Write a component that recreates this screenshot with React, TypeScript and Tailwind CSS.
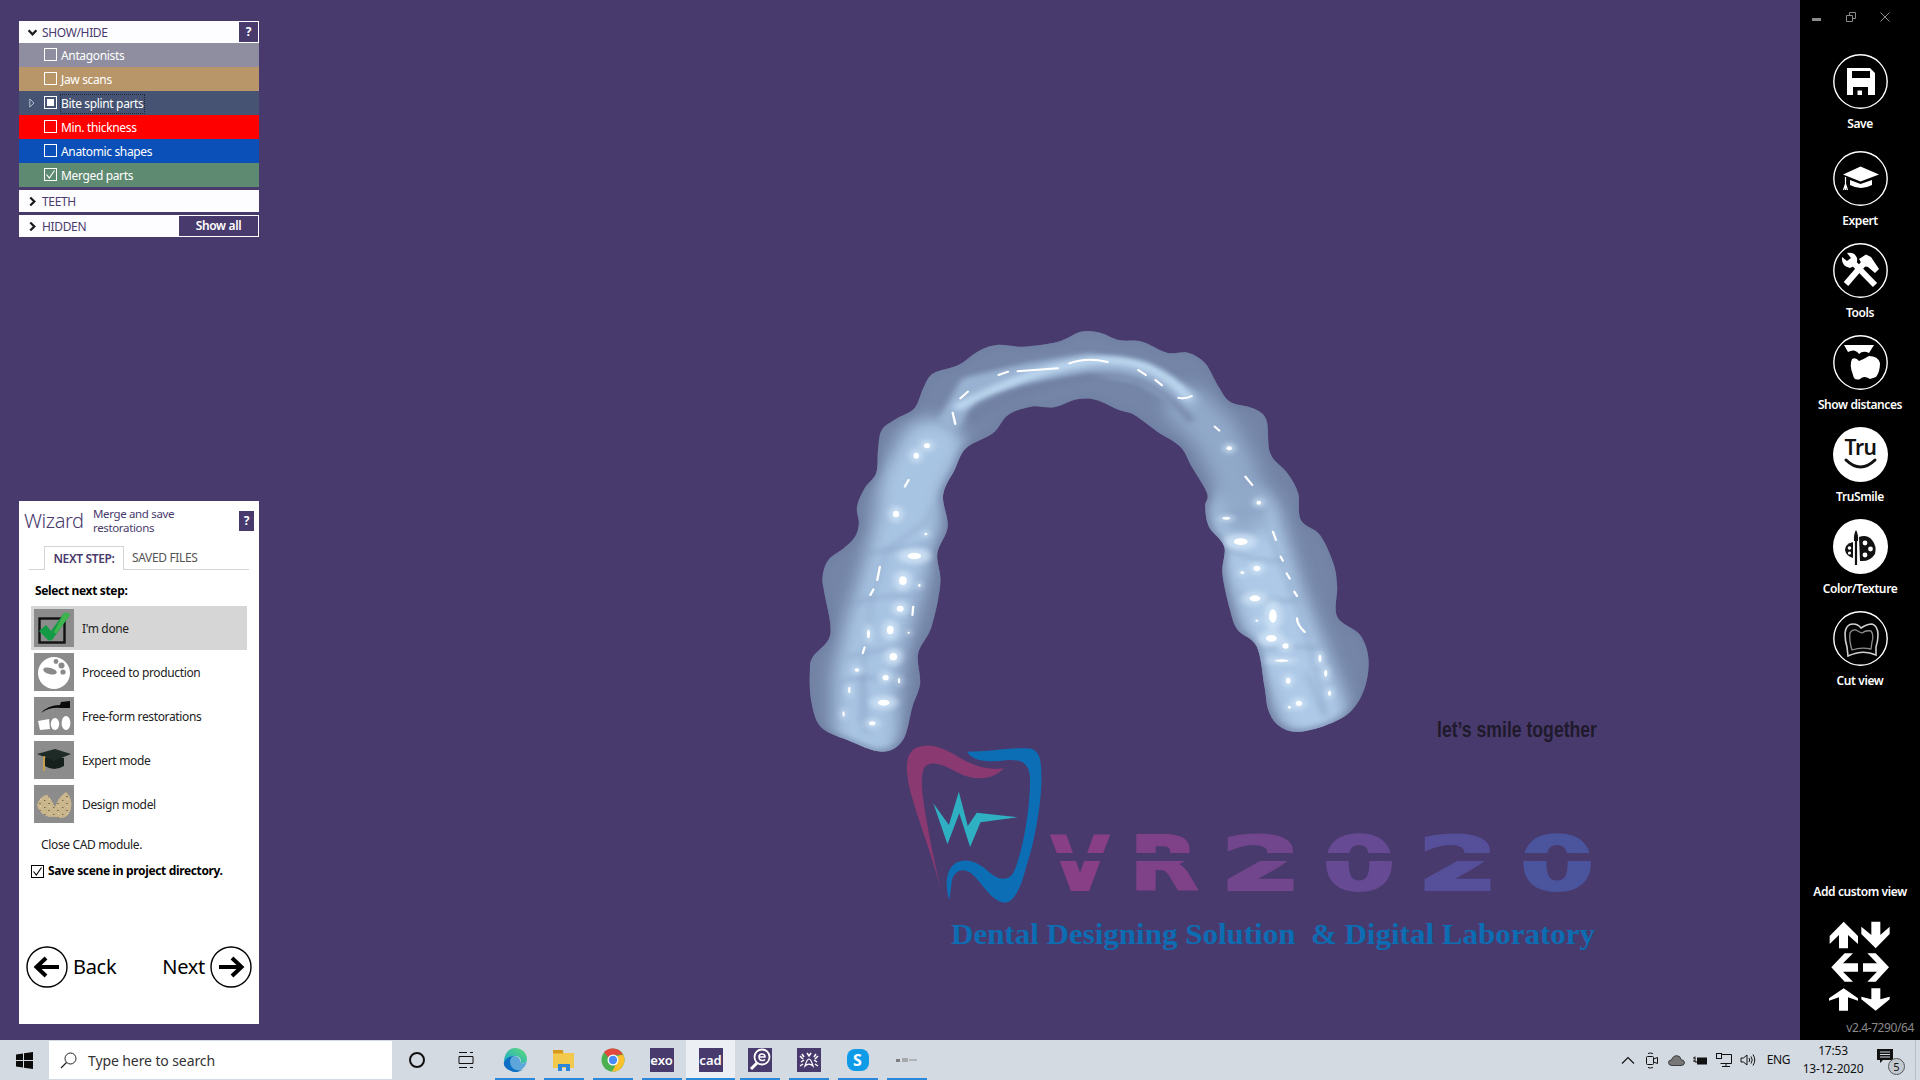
import type { ReactNode } from "react";

const smooth = (pts: number[][]) => {
  const n = pts.length;
  let d = `M${pts[0][0]},${pts[0][1]}`;
  for (let i = 0; i < n; i++) {
    const p0 = pts[(i - 1 + n) % n];
    const p1 = pts[i];
    const p2 = pts[(i + 1) % n];
    const p3 = pts[(i + 2) % n];
    d += ` C${p1[0] + (p2[0] - p0[0]) / 6},${p1[1] + (p2[1] - p0[1]) / 6} ${p2[0] - (p3[0] - p1[0]) / 6},${p2[1] - (p3[1] - p1[1]) / 6} ${p2[0]},${p2[1]}`;
  }
  return d + "Z";
};

const outline = [
  [52, 1080], [60, 1040], [100, 990], [105, 940], [90, 850], [85, 800], [100, 750], [140, 715], [170, 680], [180, 640],
  [175, 590], [195, 535], [225, 490], [230, 420], [240, 360], [280, 325], [325, 295], [350, 230], [375, 190], [440, 165],
  [490, 125], [540, 105], [610, 110], [700, 95], [760, 65], [810, 68], [860, 90], [920, 95], [985, 128], [1040, 128],
  [1085, 160], [1120, 230], [1150, 275], [1210, 295], [1245, 330], [1255, 430], [1300, 490], [1328, 550], [1335, 630],
  [1385, 675], [1420, 760], [1430, 830], [1430, 920], [1490, 975], [1512, 1050], [1500, 1140], [1460, 1210], [1390, 1250],
  [1320, 1265], [1275, 1245], [1250, 1200], [1240, 1130], [1220, 1010], [1170, 960], [1150, 900], [1130, 790], [1135, 710],
  [1095, 650], [1085, 590], [1090, 550], [1050, 470], [1020, 410], [960, 365], [900, 315], [860, 300], [800, 270], [750, 268],
  [690, 292], [630, 290], [570, 315], [530, 370], [460, 415], [430, 480], [400, 555], [412, 650], [385, 730], [393, 820],
  [370, 950], [335, 1030], [340, 1120], [320, 1190], [295, 1290], [240, 1325], [150, 1290], [80, 1250], [55, 1170],
];

const spots = [
  [358, 407, 8, 7], [330, 437, 7, 9], [277, 612, 8, 10], [325, 738, 18, 10], [295, 812, 10, 13], [288, 896, 9, 9],
  [262, 960, 9, 13], [205, 972, 4, 13], [270, 1040, 10, 11], [250, 1103, 8, 8], [245, 1178, 15, 9], [155, 1140, 3, 10],
  [215, 1240, 8, 6], [175, 1080, 6, 5], [1148, 415, 7, 6], [1225, 578, 6, 6], [1140, 625, 10, 4], [1178, 695, 18, 10],
  [1220, 775, 9, 8], [1215, 865, 14, 9], [1262, 918, 10, 20], [1258, 985, 14, 10], [1295, 1008, 8, 8], [1285, 1052, 18, 4],
  [1302, 1112, 6, 9], [1330, 1180, 8, 8], [1385, 1045, 4, 11], [1400, 1090, 4, 10], [1410, 1150, 4, 8], [1305, 1192, 4, 4],
  [140, 1212, 3, 8], [285, 1112, 3, 8], [355, 672, 4, 4], [338, 826, 3, 5], [310, 968, 3, 3], [1182, 788, 5, 4], [1220, 932, 4, 3],
];

const glints = [
  "M545,195 L570,185", "M595,184 L700,175", "M730,160 Q775,140 830,156", "M910,180 L930,195", "M955,210 L972,226",
  "M1015,263 Q1035,268 1050,258", "M1110,350 L1122,362", "M445,265 L465,245", "M425,308 L432,342", "M1190,500 L1208,525",
  "M1262,665 L1270,690", "M1282,740 L1288,752", "M1298,790 L1306,806", "M1318,845 L1325,858", "M1325,925 Q1325,945 1345,966",
  "M300,530 L310,510", "M228,810 L235,770", "M210,855 L218,838", "M190,1030 L195,1012", "M322,890 L320,915",
];

const grooves = [
  "M150,1040 L320,1000", "M130,1120 L190,1100 L200,1270", "M190,1100 L320,1120", "M170,880 Q240,850 350,860", "M200,730 L370,700",
  "M1230,1020 Q1320,1000 1400,1020", "M1350,1090 L1395,1210", "M1170,850 Q1250,880 1330,870", "M1150,720 Q1220,760 1290,750", "M1110,620 L1240,600",
];

function Aligner() {
  const d = smooth(outline);
  return (
    <svg className="absolute left-[790px] top-[310px]" width={600} height={460} viewBox="0 0 1568 1380" preserveAspectRatio="none">
      <defs>
        <clipPath id="arch"><path d={d} /></clipPath>
        <filter id="b20" filterUnits="userSpaceOnUse" x={0} y={0} width={1568} height={1380}><feGaussianBlur stdDeviation="24" /></filter>
        <filter id="b8" filterUnits="userSpaceOnUse" x={0} y={0} width={1568} height={1380}><feGaussianBlur stdDeviation="8" /></filter>
        <filter id="b1" filterUnits="userSpaceOnUse" x={0} y={0} width={1568} height={1380}><feGaussianBlur stdDeviation="1.5" /></filter>
      </defs>
      <path d={d} fill="#7485a7" />
      <g clipPath="url(#arch)">
        <path d="M200,1280 L200,1100 L230,950 L270,800 L305,650 L320,520 L370,410" fill="none" stroke="#a8c4e3" strokeWidth={170} strokeLinecap="round" strokeLinejoin="round" filter="url(#b20)" />
        <path d="M1365,1200 L1315,1050 L1262,900 L1222,760 L1185,620" fill="none" stroke="#adc9e7" strokeWidth={185} strokeLinecap="round" strokeLinejoin="round" filter="url(#b20)" />
        <path d="M1185,620 L1160,480 L1110,370 L1040,290" fill="none" stroke="#91a9c9" strokeWidth={120} strokeLinecap="round" filter="url(#b20)" />
        <path d="M420,330 L470,230 L620,190 L780,160 L920,190 L1040,270" fill="none" stroke="#9ab2d1" strokeWidth={60} strokeLinecap="round" strokeLinejoin="round" filter="url(#b8)" />
        <path d="M440,290 Q620,180 780,155 T1040,262" fill="none" stroke="#bcd6ef" strokeWidth={24} strokeLinecap="round" filter="url(#b8)" />
        <path d="M470,325 Q620,225 780,198 T1050,335" fill="none" stroke="#6f7ea3" strokeWidth={18} filter="url(#b8)" opacity={0.7} />
        <path d="M470,440 L350,640 L255,720 L215,860 L195,1020 L185,1240" fill="none" stroke="#8ea6c8" strokeWidth={10} filter="url(#b8)" opacity={0.55} />
        <path d="M1180,480 L1240,640 L1290,780 L1330,900 L1380,1100 L1400,1220" fill="none" stroke="#8ea6c8" strokeWidth={10} filter="url(#b8)" opacity={0.55} />
        {grooves.map((g, i) => (
          <path key={i} d={g} fill="none" stroke="#88a0c4" strokeWidth={9} filter="url(#b8)" opacity={0.6} />
        ))}
        <path d={d} fill="none" stroke="#6f7fa1" strokeWidth={14} filter="url(#b8)" opacity={0.7} />
        {spots.map(([x, y, rx, ry], i) => (
          <ellipse key={i} cx={x} cy={y} rx={rx * 2.4} ry={ry * 2.4} fill="#d3e6f8" opacity={0.75} filter="url(#b8)" />
        ))}
        <g filter="url(#b1)">
          {spots.map(([x, y, rx, ry], i) => (
            <ellipse key={i} cx={x} cy={y} rx={rx} ry={ry} fill="#fff" />
          ))}
          {glints.map((g, i) => (
            <path key={i} d={g} fill="none" stroke="#fff" strokeWidth={6} strokeLinecap="round" />
          ))}
        </g>
      </g>
    </svg>
  );
}

const logoLetters: [string, number, number, string][] = [
  ["V", 200, 1.0, "#893f85"],
  ["R", 284, 1.2, "#7f4187"],
  ["2", 381, 1.58, "#72468c"],
  ["0", 479, 1.4, "#674a94"],
  ["2", 578, 1.58, "#564f99"],
  ["0", 677, 1.44, "#4a559d"],
];

function Logo() {
  return (
    <svg className="absolute left-[880px] top-[700px]" width={740} height={270} viewBox="0 0 740 270">
      <text transform="translate(557,37) scale(0.98,1.2)" fontFamily="'Liberation Sans', sans-serif" fontWeight={700} fontSize={18} fill="#1f1a2b">let’s smile together</text>
      <g transform="scale(0.4719,0.3333)">
        <path d="M130,575 C110,460 75,340 62,260 C55,210 52,165 75,145 C105,125 135,145 165,170 C195,195 225,212 262,205 C245,235 205,248 165,218 C135,195 110,180 95,200 C85,225 88,270 95,330 C105,420 118,500 130,575Z" fill="#8a3a70" />
        <path d="M185,155 C235,155 285,140 320,146 C342,155 342,190 342,250 C340,330 325,440 310,500 C298,565 285,605 265,608 C235,605 215,545 195,522 C175,498 155,515 152,545 L147,600 C138,560 138,510 160,490 C185,470 210,490 230,515 C250,540 270,545 282,520 C300,470 318,340 318,240 C318,195 305,178 270,180 C235,188 195,185 185,155Z" fill="#0c6fb5" />
        <path d="M113,310 L146,375 L167,275 L186,378 L205,338 L292,352 L213,367 L191,441 L168,340 L143,433Z" fill="#2fb0c2" />
      </g>
      {logoLetters.map(([c, x, sx, col], i) => (
        <text key={i} transform={`translate(${x},190) scale(${sx},1)`} textAnchor="middle" fontFamily="'DejaVu Sans', sans-serif" fontWeight={700} fontSize={75} fill={col} stroke={col} strokeWidth={2}>{c}</text>
      ))}
      <rect x={160} y={153} width={560} height={8} fill="#493a6d" />
      <text x={71} y={244} fontFamily="'Liberation Serif', serif" fontWeight={700} fontSize={30} fill="#0d6db3" textLength={644} lengthAdjust="spacingAndGlyphs" xmlSpace="preserve">Dental Designing Solution  &amp; Digital Laboratory</text>
    </svg>
  );
}

function Chevron({ open }: { open?: boolean }) {
  return (
    <svg width={9} height={9} viewBox="0 0 8 8" className="shrink-0">
      <path d={open ? "M.5 2 L4 5.6 L7.5 2" : "M2 .5 L5.6 4 L2 7.5"} fill="none" stroke="#1a1a1a" strokeWidth={2} />
    </svg>
  );
}

const parts = [
  { name: "Antagonists", bg: "bg-[#8e8ea0]", mark: "none" },
  { name: "Jaw scans", bg: "bg-[#b8966a]", mark: "none" },
  { name: "Bite splint parts", bg: "bg-[#465372]", mark: "some", arrow: true },
  { name: "Min. thickness", bg: "bg-[#ff0000]", mark: "none" },
  { name: "Anatomic shapes", bg: "bg-[#0a50b8]", mark: "none" },
  { name: "Merged parts", bg: "bg-[#5f8a72]", mark: "all" },
];

function ShowHide() {
  return (
    <div className="w-[240px] flex flex-col text-[12px] tracking-[-0.35px]">
      <div className="h-[22px] bg-[#fdfdff] flex items-center pl-[9px] text-[#493a6d]">
        <Chevron open />
        <span className="ml-[5px] pt-[1px]">SHOW/HIDE</span>
        <span className="ml-auto w-[21px] h-[22px] bg-[#493a6d] border border-white text-white font-bold flex items-center justify-center">?</span>
      </div>
      {parts.map((p) => (
        <div key={p.name} className={`h-[24px] flex items-center pl-[25px] text-white relative ${p.bg}`}>
          {p.arrow && (
            <svg width={6} height={10} viewBox="0 0 6 10" className="absolute left-[10px] top-[7px]">
              <path d="M.8 1 L5 5 L.8 9Z" fill="none" stroke="#b9c0d0" />
            </svg>
          )}
          <span className="w-[13px] h-[13px] border border-white flex items-center justify-center shrink-0 mb-[2px]">
            {p.mark === "some" && <span className="w-[7px] h-[7px] bg-white" />}
            {p.mark === "all" && (
              <svg width={11} height={11} viewBox="0 0 11 11">
                <path d="M1.5 5.5 L4.3 9 L9.5 1.5" fill="none" stroke="#fff" strokeWidth={1.1} />
              </svg>
            )}
          </span>
          <span className={`ml-[4px] mt-[1px] ${p.arrow ? "outline-1 outline-dotted outline-[#20283c]" : ""}`}>{p.name}</span>
        </div>
      ))}
      <div className="mt-[3px] h-[22px] bg-[#fdfdff] flex items-center pl-[9px] text-[#493a6d]">
        <Chevron />
        <span className="ml-[5px] pt-[1px]">TEETH</span>
      </div>
      <div className="mt-[3px] h-[22px] bg-[#fdfdff] flex items-center pl-[9px] text-[#493a6d]">
        <Chevron />
        <span className="ml-[5px] pt-[1px]">HIDDEN</span>
        <span className="ml-auto w-[81px] h-[22px] bg-[#493a6d] border border-white text-white font-semibold flex items-center justify-center">Show all</span>
      </div>
    </div>
  );
}

const iconDone = (
  <svg width={40} height={38} viewBox="0 0 40 38">
    <rect x={5.5} y={9.5} width={25} height={24} fill="none" stroke="#111" strokeWidth={2.4} />
    <path d="M5 22 L12 16 L17 22 L30 4 Q34 3 36 6 L18 31 Q16 32 14 31Z" fill="#139a45" />
    <path d="M30 4 Q34 3 36 6 L22 25 L20 23Z" fill="#3fb34d" />
  </svg>
);

const iconProduction = (
  <svg width={40} height={38} viewBox="0 0 40 38">
    <circle cx={20} cy={20} r={16} fill="#fff" />
    <g fill="#8a8a8a">
      <ellipse cx={16} cy={18} rx={7} ry={3.2} transform="rotate(15 16 18)" />
      <circle cx={22} cy={8.5} r={2.4} />
      <circle cx={27.5} cy={12.5} r={3} />
      <circle cx={29} cy={19} r={2.6} />
    </g>
  </svg>
);

const iconFreeform = (
  <svg width={40} height={38} viewBox="0 0 40 38">
    <path d="M7 16 Q14 8 26 8 L27 5 L36 4 L36 11 L27 11 Q15 10 7 16Z" fill="#0a0a0a" />
    <g fill="#fff">
      <path d="M4 24 L15 22 L16 32 L6 33Z" />
      <ellipse cx={21} cy={27} rx={4.2} ry={6} />
      <ellipse cx={32} cy={26} rx={4.4} ry={7} />
    </g>
  </svg>
);

const iconExpert = (
  <svg width={40} height={38} viewBox="0 0 40 38">
    <path d="M11 17 L11 25 Q20 31 30 25 L30 17Z" fill="#151f1b" />
    <path d="M3 13 L21 8 L37 13 L20 20Z" fill="#1d2a26" />
    <path d="M10 15 L10 30" stroke="#d6a63e" strokeWidth={1.6} />
  </svg>
);

const iconModel = (
  <svg width={40} height={38} viewBox="0 0 40 38">
    <defs>
      <pattern id="speck" width={9} height={7} patternUnits="userSpaceOnUse">
        <rect width={9} height={7} fill="#c9b68c" />
        <rect x={1} y={1} width={1.5} height={1} fill="#7a6a4a" />
        <rect x={5} y={4} width={2} height={1} fill="#857453" />
        <rect x={6} y={0} width={1} height={1} fill="#e3d6b4" />
      </pattern>
    </defs>
    <path d="M3 20 Q7 9 14 10 Q18 16 21 22 Q25 11 32 7 Q39 13 37 24 Q34 34 25 33 Q20 31 15 32 Q5 29 3 20Z" fill="url(#speck)" />
  </svg>
);

const steps = [
  { label: "I'm done", icon: iconDone, active: true },
  { label: "Proceed to production", icon: iconProduction },
  { label: "Free-form restorations", icon: iconFreeform },
  { label: "Expert mode", icon: iconExpert },
  { label: "Design model", icon: iconModel },
];

function RoundArrow({ flip }: { flip?: boolean }) {
  return (
    <svg width={42} height={42} viewBox="0 0 42 42" className={flip ? "-scale-x-100" : ""}>
      <circle cx={21} cy={21} r={20} fill="none" stroke="#000" strokeWidth={1.4} />
      <path d="M33 21 L11 21 M20 12 L10.5 21 L20 30" fill="none" stroke="#000" strokeWidth={4} />
    </svg>
  );
}

function Wizard() {
  return (
    <div className="w-[240px] h-[523px] bg-white flex flex-col relative text-[12px] tracking-[-0.35px] text-[#222]">
      <div className="flex items-center h-[40px] pl-[5px] pr-[5px]">
        <span className="text-[20px] font-light text-[#493a6d] w-[69px] tracking-[-0.4px]">Wizard</span>
        <span className="leading-[14px] text-[#493a6d] w-[110px] text-[11.5px] -mt-[1px]">Merge and save restorations</span>
        <span className="ml-auto w-[15px] h-[20px] bg-[#493a6d] text-white font-bold flex items-center justify-center">?</span>
      </div>
      <div className="mx-[10px] mt-[5px] flex h-[24px] border-b border-[#d4d4d4]">
        <span className="ml-[15px] w-[80px] h-[24px] border border-b-0 border-[#d4d4d4] bg-white flex items-center justify-center font-semibold text-[#493a6d]">NEXT STEP:</span>
        <span className="ml-[8px] text-[#555] flex items-center">SAVED FILES</span>
      </div>
      <div className="mt-[13px] ml-[16px] font-bold text-black leading-[16px]">Select next step:</div>
      <div className="mt-[7px] ml-[12px] w-[216px] flex flex-col">
        {steps.map((s) => (
          <div key={s.label} className={`h-[44px] flex items-center pl-[3px] ${s.active ? "bg-[#d6d6d6]" : ""}`}>
            <span className="w-[40px] h-[38px] bg-[#8c8c8c] shrink-0 block">{s.icon}</span>
            <span className="ml-[8px] mt-[2px]">{s.label}</span>
          </div>
        ))}
      </div>
      <div className="mt-[11px] ml-[22px] leading-[16px]">Close CAD module.</div>
      <div className="mt-[9px] ml-[12px] flex items-center font-bold text-black">
        <span className="w-[13px] h-[13px] border border-black flex items-center justify-center">
          <svg width={11} height={11} viewBox="0 0 11 11"><path d="M1.5 5.5 L4.3 9 L9.5 1.5" fill="none" stroke="#000" strokeWidth={1.1} /></svg>
        </span>
        <span className="ml-[4px]">Save scene in project directory.</span>
      </div>
      <div className="mt-[66px] px-[7px] flex items-center justify-between text-[20px] tracking-[-0.3px] text-black">
        <div className="flex items-center gap-[5px]">
          <RoundArrow />
          <span>Back</span>
        </div>
        <div className="flex items-center gap-[5px]">
          <span>Next</span>
          <RoundArrow flip />
        </div>
      </div>
    </div>
  );
}

const ring = <circle cx={27.5} cy={27.5} r={26.7} fill="none" stroke="#fff" strokeWidth={1.4} />;
const disc = <circle cx={27.5} cy={27.5} r={27.5} fill="#fff" />;

const toolIcons: { label: string; icon: ReactNode }[] = [
  {
    label: "Save",
    icon: (
      <>
        {ring}
        <path fillRule="evenodd" d="M14 14 H37 L42 19 V41 H14Z M19 17 V24 H37 V17Z M20 33 V41 H35 V33Z" fill="#fff" />
        <rect x={24.5} y={36.5} width={4.5} height={4.5} fill="#fff" />
      </>
    ),
  },
  {
    label: "Expert",
    icon: (
      <>
        {ring}
        <path d="M27.5 15.5 L46 23.5 L27.5 30.5 L10 23.5Z" fill="#fff" />
        <path d="M17 29 L27.5 33 L39 29 L39 34 Q28 40 17 34Z" fill="#fff" />
        <path d="M12.5 26 V33 M12.5 33 L10.5 39 M12.5 33 L14.5 39 M12.5 33 V39" stroke="#fff" strokeWidth={1.2} fill="none" />
      </>
    ),
  },
  {
    label: "Tools",
    icon: (
      <>
        {ring}
        <path d="M13 41 L32 19" stroke="#fff" strokeWidth={6} />
        <path d="M26 16 L33 11.5 L38 14 L46 26 L42 30 L35 24 L30 23Z" fill="#fff" />
        <path d="M21.5 21 L42 42" stroke="#fff" strokeWidth={6} />
        <path d="M9 14 L14 18 L18 15 L14 10 Q22 9 24 15 Q25 20 21 23 L17 25 Q8 23 9 14Z" fill="#fff" />
      </>
    ),
  },
  {
    label: "Show distances",
    icon: (
      <>
        {ring}
        <path d="M11 10 L41 10 L36 18 Q30 15 26 19 Q22 13 15 17Z" fill="#fff" />
        <path d="M19 24 Q23 22 26 26 Q31 24 36 21 Q45 21 47 28 Q47 37 43 42 L37 44 Q31 40 27 44 Q21 46 20 40 Q16 30 19 24Z" fill="#fff" />
      </>
    ),
  },
  {
    label: "TruSmile",
    icon: (
      <>
        {disc}
        <text x={27.5} y={28} textAnchor="middle" fontFamily="'Noto Sans', sans-serif" fontSize={21} fill="#111">Tru</text>
        <path d="M13 33 Q27.5 47 42 33" fill="none" stroke="#111" strokeWidth={3} strokeLinecap="round" />
      </>
    ),
  },
  {
    label: "Color/Texture",
    icon: (
      <>
        {disc}
        <path d="M26 18 Q34 15 39 21 Q44 27 42 35 Q37 43 27 42Z" fill="#111" />
        <path d="M20 23 Q12 25 12 31 Q13 37 20 39Z" fill="#111" />
        <circle cx={32} cy={24} r={2.4} fill="#fff" />
        <circle cx={37.5} cy={30} r={2.4} fill="#fff" />
        <circle cx={32} cy={36} r={2.4} fill="#fff" />
        <circle cx={16.5} cy={29} r={1.8} fill="#fff" />
        <circle cx={16.5} cy={34} r={1.6} fill="#fff" />
        <path d="M23 18 V46" stroke="#111" strokeWidth={2.2} />
        <path d="M23 11 Q25.5 15 25 22 H21 Q20.5 15 23 11Z" fill="#111" />
      </>
    ),
  },
  {
    label: "Cut view",
    icon: (
      <>
        {ring}
        <path d="M12 22 Q13 13 20 13 Q25 13 28 17 Q34 13 39 13 Q45 15 45 24 Q45 30 43 36 L43 44 Q30 38 15 45 L14 36 Q12 30 12 22Z" fill="none" stroke="#cfcfcf" strokeWidth={1.6} />
        <path d="M17 22 Q19 18 23 19 Q26 21 29 22 Q33 19 38 20 Q41 24 39 31 L38 38 Q28 36 19 39 Q16 30 17 22Z" fill="none" stroke="#8d8d8d" strokeWidth={1.3} />
      </>
    ),
  },
];

function Sidebar() {
  return (
    <aside className="w-[120px] bg-black flex flex-col text-white text-[12px] tracking-[-0.4px] font-semibold">
      <div className="flex h-[34px] shrink-0">
        <span className="w-[34px] flex items-center justify-center">
          <svg width={10} height={4} viewBox="0 0 10 4" className="mt-[6px]"><rect width={9} height={3} fill="#8b8b8b" /></svg>
        </span>
        <span className="w-[34px] flex items-center justify-center">
          <svg width={10} height={10} viewBox="0 0 10 10"><path d="M.5 3.5 H6.5 V9.5 H.5Z M3.5 3.5 V.5 H9.5 V6.5 H6.5" fill="none" stroke="#8b8b8b" /></svg>
        </span>
        <span className="w-[34px] flex items-center justify-center">
          <svg width={10} height={10} viewBox="0 0 10 10"><path d="M.5 .5 L9.5 9.5 M9.5 .5 L.5 9.5" stroke="#8b8b8b" /></svg>
        </span>
      </div>
      <div className="mt-[20px] flex flex-col">
        {toolIcons.map((t, i) => (
          <div key={t.label} className={`h-[92px] flex flex-col items-center ${i === 0 ? "mb-[5px]" : ""}`}>
            <svg width={55} height={55} viewBox="0 0 55 55" className="shrink-0">{t.icon}</svg>
            <span className="mt-[7px] leading-[16px]">{t.label}</span>
          </div>
        ))}
      </div>
      <div className="mt-auto flex flex-col items-center pb-[4px]">
        <span className="leading-[16px]">Add custom view</span>
        <svg width={64} height={92} viewBox="115 150 192 276" className="mt-[20px]" fill="#fff">
          <path d="M162,155 L205,198 V222 L175,195 V235 H148 V195 L120,222 V198Z" />
          <path d="M258,235 L300,192 V170 L272,195 V155 H245 V195 L215,170 V192Z" />
          <path d="M125,292 L165,250 H190 L160,280 H205 V305 H160 L190,335 H165Z" />
          <path d="M298,292 L258,250 H233 L262,280 H220 V305 H262 L233,335 H258Z" />
          <path d="M162,355 L205,385 V392 L175,382 V422 H148 V382 L118,392 V385Z" />
          <path d="M258,422 L300,388 V380 L272,388 V355 H245 V388 L215,380 V388Z" />
        </svg>
        <span className="mt-[8px] self-end pr-[6px] leading-[16px] text-[#8a8a8a] font-normal">v2.4-7290/64</span>
      </div>
    </aside>
  );
}

const squareLabel = "w-[24px] h-[24px] bg-[#493a6d] text-white text-[13px] font-semibold flex items-center justify-center leading-none";

const taskApps: { key: string; icon: ReactNode; active?: boolean }[] = [
  {
    key: "edge",
    icon: (
      <svg width={24} height={24} viewBox="0 0 24 24">
        <defs>
          <linearGradient id="edgeTop" x1="0" y1="1" x2="1" y2="0">
            <stop offset="0" stopColor="#1aa7c9" />
            <stop offset="1" stopColor="#5fdc7a" />
          </linearGradient>
        </defs>
        <path d="M12 0 C19 0 24 5 24 11 C24 15 20 16 17 15 C19 12 17 8 12 8 C7 8 3 11 1 14 C1 6 6 0 12 0Z" fill="url(#edgeTop)" />
        <path d="M1 14 C3 10 7 8 11 8 C7 10 6 15 9 19 C12 23 17 23 20 21 C17 24 12 25 8 23 C3 21 0 18 1 14Z" fill="#0c6fc4" />
        <path d="M11 8 C15 8 18 11 17 15 C20 16 23 15 24 13 C23 18 20 21 17 22 C12 23 8 21 7 16 C7 12 8 10 11 8Z" fill="#1b8bd6" opacity={0.65} />
      </svg>
    ),
  },
  {
    key: "files",
    icon: (
      <svg width={24} height={24} viewBox="0 0 24 24">
        <path d="M1 2 H10 L12 5 H22 V20 H1Z" fill="#f2c94c" />
        <rect x={1} y={2} width={10} height={3.5} fill="#d9991f" />
        <path d="M6 16 H18 V23 H14 V19 H10 V23 H6Z" fill="#2b86d9" />
      </svg>
    ),
  },
  {
    key: "chrome",
    icon: (
      <svg width={24} height={24} viewBox="0 0 24 24">
        <circle cx={12} cy={12} r={11.5} fill="#4caf50" />
        <path d="M12 .5 A11.5 11.5 0 0 1 22 6.5 L12 7 A5 5 0 0 0 7.5 10 L3 4 A11.5 11.5 0 0 1 12 .5Z" fill="#e2483d" />
        <path d="M22 6.5 A11.5 11.5 0 0 1 11 23.5 L16 14.5 A5 5 0 0 0 16 8 Z" fill="#fbc02d" />
        <circle cx={12} cy={12} r={5.5} fill="#fff" />
        <circle cx={12} cy={12} r={4.2} fill="#4b8bf5" />
      </svg>
    ),
  },
  { key: "exo", icon: <span className={squareLabel}>exo</span> },
  { key: "cad", icon: <span className={squareLabel}>cad</span>, active: true },
  {
    key: "search-e",
    icon: (
      <svg width={24} height={24} viewBox="0 0 24 24">
        <rect width={24} height={24} fill="#493a6d" />
        <circle cx={14} cy={9} r={7.5} fill="none" stroke="#fff" strokeWidth={1.8} />
        <path d="M9 15 L3 21" stroke="#fff" strokeWidth={3} />
        <path d="M11 9 H17 Q17 6 14 6 Q11 6 11 9 Q11 12.5 14.5 12.5 Q16 12.5 17 11.5" fill="none" stroke="#fff" strokeWidth={1.5} />
      </svg>
    ),
  },
  {
    key: "teeth",
    icon: (
      <svg width={24} height={24} viewBox="0 0 24 24">
        <rect width={24} height={24} fill="#493a6d" />
        <path d="M8 18 Q12 4 16 18 Q12 14 8 18Z" fill="none" stroke="#fff" strokeWidth={1.2} />
        <path d="M3 8 L6 11 M4 14 L7 12 M3 18 L6 16 M5 6 L7 9 M21 8 L18 11 M20 14 L17 12 M21 18 L18 16 M19 6 L17 9 M10 5 L12 8 L14 5" stroke="#fff" strokeWidth={1.5} fill="none" />
      </svg>
    ),
  },
  {
    key: "skype",
    icon: (
      <span className="w-[22px] h-[22px] rounded-[8px] bg-[#0f9be8] text-white text-[16px] font-bold flex items-center justify-center leading-none">S</span>
    ),
  },
  {
    key: "blur",
    icon: (
      <svg width={24} height={10} viewBox="0 0 24 10">
        <rect x={1} y={4} width={4} height={3} fill="#555" opacity={0.7} />
        <rect x={7} y={3} width={6} height={4} fill="#888" opacity={0.6} />
        <rect x={14} y={4} width={8} height={2} fill="#999" opacity={0.6} />
      </svg>
    ),
  },
];

const trayIcons: ReactNode[] = [
  <svg key="up" width={14} height={8} viewBox="0 0 14 8"><path d="M1 7.5 L7 1.5 L13 7.5" fill="none" stroke="#111" strokeWidth={1.1} /></svg>,
  <svg key="cam" width={14} height={17} viewBox="0 0 14 17" fill="none" stroke="#111"><rect x={1.5} y={4.5} width={7} height={8} rx={1} /><path d="M8.5 7 L12.5 5.5 V11.5 L8.5 10 M3 1.5 Q5 .5 8 1.5 M3 15.5 Q5 16.5 8 15.5" /></svg>,
  <svg key="cloud" width={17} height={11} viewBox="0 0 17 11"><path d="M4 10.5 Q.5 10.5 .5 7.5 Q.5 5 3.5 5 Q5 .5 9 .7 Q12.5 1 13 4.5 Q16.5 5 16.5 8 Q16 10.5 13 10.5Z" fill="#777" stroke="#222" strokeWidth={0.8} /></svg>,
  <svg key="bat" width={16} height={11} viewBox="0 0 16 11"><path d="M1 3 H3 M1 6 H3 M3 1.5 V7 H5" fill="none" stroke="#111" /><rect x={5} y={2.5} width={10} height={7} fill="#111" /></svg>,
  <svg key="net" width={16} height={15} viewBox="0 0 16 15" fill="none" stroke="#111"><path d="M4.5 1.5 H15.5 V10.5 H4.5 M10 10.5 V13.5 M6 13.5 H14" /><rect x={.5} y={.5} width={5} height={5} fill="#d3dae2" /></svg>,
  <svg key="vol" width={16} height={14} viewBox="0 0 16 14" fill="none" stroke="#111"><path d="M1 5 H3.5 L7 2 V12 L3.5 9 H1Z M9 5 Q10.5 7 9 9 M11 3.5 Q13.5 7 11 10.5 M13 1.5 Q16.5 7 13 12.5" /></svg>,
];

function Taskbar() {
  return (
    <footer className="h-[40px] bg-[#d3dae2] flex items-center shrink-0 text-[#111] font-['Noto_Sans',sans-serif]">
      <span className="w-[49px] flex items-center justify-center">
        <svg width={17} height={17} viewBox="0 0 17 17" fill="#0a0a0a"><path d="M0 2.4 L7 1.4 V8 H0Z M8 1.2 L17 0 V8 H8Z M0 9 H7 V15.6 L0 14.6Z M8 9 H17 V17 L8 15.8Z" /></svg>
      </span>
      <div className="w-[343px] h-[38px] bg-white flex items-center pl-[11px]">
        <svg width={17} height={17} viewBox="0 0 17 17" fill="none" stroke="#222"><circle cx={10.5} cy={6.5} r={5.5} /><path d="M6.5 10.5 L1 16" strokeWidth={1.3} /></svg>
        <span className="ml-[11px] text-[14px] tracking-[-0.1px] text-[#333]">Type here to search</span>
      </div>
      <span className="w-[49px] flex items-center justify-center">
        <span className="w-[16px] h-[16px] rounded-full border-2 border-[#111]" />
      </span>
      <span className="w-[49px] flex items-center justify-center">
        <svg width={16} height={18} viewBox="0 0 16 18" fill="none" stroke="#111"><path d="M1 5.5 H15 V12.5 H1Z M1 1.5 H9 M12 1.5 H15 M1 16.5 H9 M12 16.5 H15" /></svg>
      </span>
      {taskApps.map((a) => (
        <div key={a.key} className={`w-[49px] h-[40px] flex items-center justify-center relative ${a.active ? "bg-[#eceff3]" : ""}`}>
          {a.icon}
          <span className={`absolute bottom-0 h-[2px] bg-[#2b88d8] ${a.active ? "inset-x-0" : "left-[5px] right-[4px]"}`} />
        </div>
      ))}
      <div className="ml-auto flex items-center h-full text-[12px]">
        {trayIcons.map((ic, i) => (
          <span key={i} className="w-[24px] flex items-center justify-center">{ic}</span>
        ))}
        <span className="w-[37px] text-center tracking-[-0.3px]">ENG</span>
        <span className="w-[72px] flex flex-col items-center leading-[18px] tracking-[-0.2px]">
          <span>17:53</span>
          <span>13-12-2020</span>
        </span>
        <span className="w-[38px] h-full relative flex items-center justify-center">
          <svg width={16} height={15} viewBox="0 0 16 15" className="mb-[8px] mr-[6px]">
            <path d="M0 0 H16 V11 H6 L3 14 V11 H0Z" fill="#111" />
            <path d="M3 3 H13 M3 5.5 H13 M3 8 H13" stroke="#d3dae2" />
          </svg>
          <span className="absolute left-[19px] top-[18px] w-[17px] h-[17px] rounded-full bg-[#c3c9d0] border border-[#555] text-[11px] flex items-center justify-center leading-none">5</span>
        </span>
        <span className="w-[13px] h-full flex"><span className="ml-[8px] w-px h-full bg-[#b8bfc7]" /></span>
      </div>
    </footer>
  );
}

export default function App() {
  return (
    <div className="w-[1920px] h-[1080px] flex flex-col overflow-hidden font-['Noto_Sans',sans-serif]">
      <div className="flex flex-1 min-h-0">
        <main className="relative flex-1 bg-[#493a6d] pl-[19px] pt-[21px] pb-[16px] flex flex-col justify-between">
          <ShowHide />
          <Wizard />
          <Aligner />
          <Logo />
        </main>
        <Sidebar />
      </div>
      <Taskbar />
    </div>
  );
}
